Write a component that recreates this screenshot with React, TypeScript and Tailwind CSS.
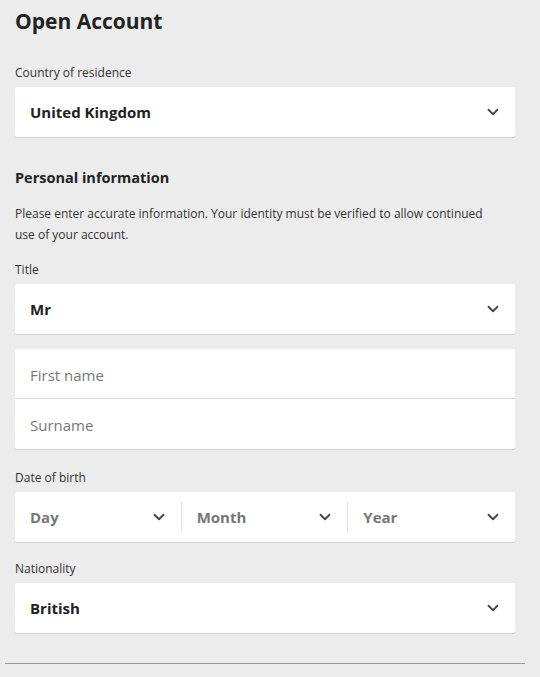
import { ChevronDown } from "lucide-react"

// 下拉框箭头
function Chevron({ className = "" }: { className?: string }) {
  return <ChevronDown className={"h-[18px] w-[18px] text-[#444] " + className} strokeWidth={2.4} />
}

function Label({ children }: { children: string }) {
  return <div className="text-[12px] leading-4 text-[#333] mb-[6px]">{children}</div>
}

function SelectBox({ value }: { value: string }) {
  return (
    <div className="h-[50px] bg-white rounded-[2px] shadow-[0_1px_0_#d0d0d0] flex items-center justify-between pl-[15px] pr-[13px]">
      <span className="text-[15px] font-bold text-[#222] pt-[1px]">{value}</span>
      <Chevron />
    </div>
  )
}

export default function App() {
  return (
    <div className="min-h-[677px] bg-[#ebeceb] font-['Open_Sans',sans-serif] text-[#222] pt-[5px]">
      <div className="px-[15px] w-[530px]">
        <h1 className="text-[21px] font-bold leading-[32px] text-[#222]">Open Account</h1>

        <div className="mt-[28px]">
          <Label>Country of residence</Label>
          <SelectBox value="United Kingdom" />
        </div>

        <h2 className="mt-[31px] text-[14.5px] font-bold leading-5 text-[#222]">Personal information</h2>
        <p className="mt-[15px] text-[12px] leading-[21px] text-[#333] pr-[10px]">
          Please enter accurate information. Your identity must be verified to allow continued use of your account.
        </p>

        <div className="mt-[17px]">
          <Label>Title</Label>
          <SelectBox value="Mr" />
        </div>

        {/* 姓名输入组 */}
        <div className="mt-[15px] bg-white rounded-[2px] shadow-[0_1px_0_#d0d0d0]">
          <div className="h-[50px] flex items-center pl-[15px] pt-[3px] border-b border-[#d8d8d8] text-[15px] text-[#777]">
            First name
          </div>
          <div className="h-[50px] flex items-center pl-[15px] pt-[3px] text-[15px] text-[#777]">Surname</div>
        </div>

        <div className="mt-[21px]">
          <Label>Date of birth</Label>
          <div className="h-[50px] bg-white rounded-[2px] shadow-[0_1px_0_#d0d0d0] grid grid-cols-3 items-center">
            <div className="flex items-center justify-between pl-[15px] pr-[13px] border-r border-[#e2e2e2] h-[30px]">
              <span className="text-[15px] font-bold text-[#777]">Day</span>
              <Chevron />
            </div>
            <div className="flex items-center justify-between pl-[15px] pr-[13px] border-r border-[#e2e2e2] h-[30px]">
              <span className="text-[15px] font-bold text-[#777]">Month</span>
              <Chevron />
            </div>
            <div className="flex items-center justify-between pl-[15px] pr-[13px] h-[30px]">
              <span className="text-[15px] font-bold text-[#777]">Year</span>
              <Chevron />
            </div>
          </div>
        </div>

        <div className="mt-[19px]">
          <Label>Nationality</Label>
          <SelectBox value="British" />
        </div>
      </div>
      <div className="mt-[30px] mx-[5px] w-[520px] border-t border-[#999]" />
    </div>
  )
}
